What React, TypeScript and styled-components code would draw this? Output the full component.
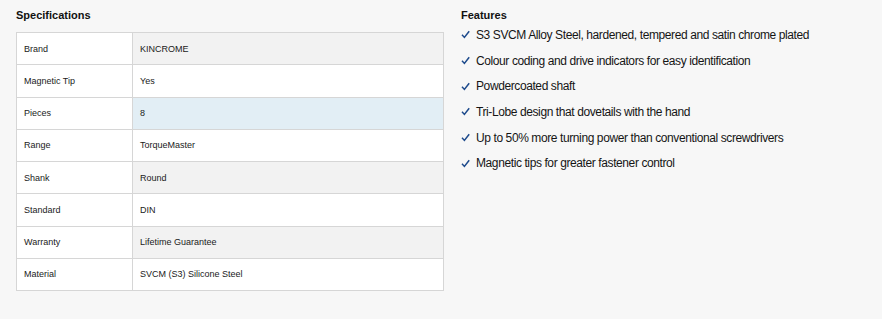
import styled, { createGlobalStyle } from 'styled-components';

const GlobalStyle = createGlobalStyle`
  html, body {
    margin: 0;
    padding: 0;
    background: #f7f7f7;
    font-family: "Liberation Sans", Arial, sans-serif;
    color: #222;
  }
`;

type Spec = { label: string; value: string };

const SPECS: Spec[] = [
  { label: 'Brand', value: 'KINCROME' },
  { label: 'Magnetic Tip', value: 'Yes' },
  { label: 'Pieces', value: '8' },
  { label: 'Range', value: 'TorqueMaster' },
  { label: 'Shank', value: 'Round' },
  { label: 'Standard', value: 'DIN' },
  { label: 'Warranty', value: 'Lifetime Guarantee' },
  { label: 'Material', value: 'SVCM (S3) Silicone Steel' },
];

const FEATURES = [
  'S3 SVCM Alloy Steel, hardened, tempered and satin chrome plated',
  'Colour coding and drive indicators for easy identification',
  'Powdercoated shaft',
  'Tri-Lobe design that dovetails with the hand',
  'Up to 50% more turning power than conventional screwdrivers',
  'Magnetic tips for greater fastener control',
];

const Page = styled.div`
  display: flex;
  gap: 17px;
  padding: 8px 16px 28px;
  height: 319px;
  box-sizing: border-box;
`;

const SpecsColumn = styled.section`
  width: 428px;
  flex-shrink: 0;
`;

const FeaturesColumn = styled.section`
  flex: 1;
`;

const Heading = styled.h3<{ $gap?: number }>`
  margin: 0 0 ${({ $gap = 10 }) => $gap}px;
  font-size: 11px;
  font-weight: bold;
  line-height: 14px;
  color: #111;
`;

const SpecTable = styled.table`
  width: 100%;
  border-collapse: collapse;
  background: #fff;
  font-size: 9px;
  color: #1a1a1a;
`;

const Row = styled.tr``;

const LabelCell = styled.td`
  width: 101px;
  height: 31.25px;
  padding: 0 7px;
  border: 1px solid #d6d6d6;
  background: #fff;
`;

const ValueCell = styled.td<{ $tone: 'plain' | 'shaded' | 'active' }>`
  padding: 0 7px;
  border: 1px solid #d6d6d6;
  background: ${({ $tone }) =>
    $tone === 'active' ? '#e2eef5' : $tone === 'shaded' ? '#f2f2f2' : '#fff'};
`;

const FeatureList = styled.ul`
  list-style: none;
  margin: 0;
  padding: 0;
`;

const FeatureItem = styled.li`
  display: flex;
  align-items: center;
  gap: 6px;
  height: 25.7px;
  font-size: 12px;
  letter-spacing: -0.4px;
  color: #151515;
`;

const Tick = () => (
  <svg width="9" height="9" viewBox="0 0 9 9" aria-hidden="true">
    <path d="M1 4.8 L3.4 7.4 L8.2 1.2" fill="none" stroke="#1d4a8c" strokeWidth="1.5" />
  </svg>
);

const toneFor = (i: number) => (i === 2 ? 'active' : i % 2 === 0 ? 'shaded' : 'plain');

const App = () => (
  <>
    <GlobalStyle />
    <Page>
      <SpecsColumn>
        <Heading>Specifications</Heading>
        <SpecTable>
          <tbody>
            {SPECS.map((spec, i) => (
              <Row key={spec.label}>
                <LabelCell>{spec.label}</LabelCell>
                <ValueCell $tone={toneFor(i)}>{spec.value}</ValueCell>
              </Row>
            ))}
          </tbody>
        </SpecTable>
      </SpecsColumn>
      <FeaturesColumn>
        <Heading $gap={0}>Features</Heading>
        <FeatureList>
          {FEATURES.map((f) => (
            <FeatureItem key={f}>
              <Tick />
              {f}
            </FeatureItem>
          ))}
        </FeatureList>
      </FeaturesColumn>
    </Page>
  </>
);

export default App;
